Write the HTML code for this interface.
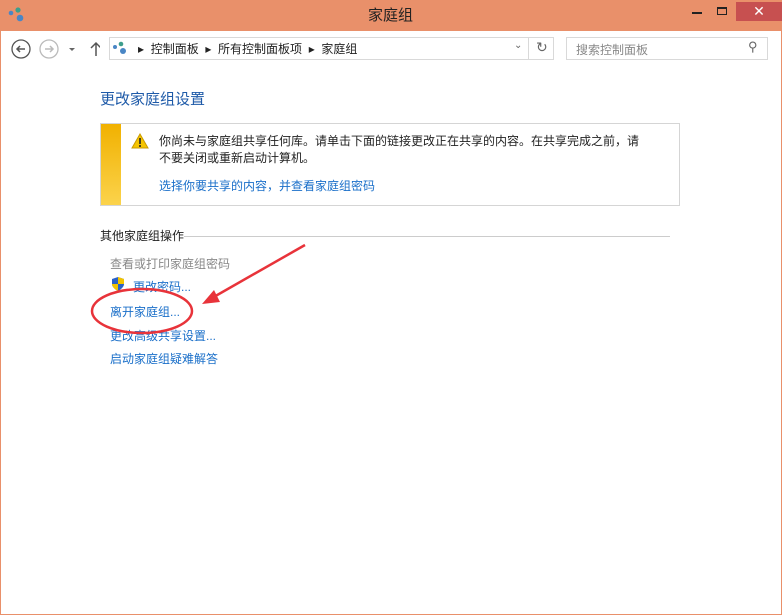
<!DOCTYPE html>
<html><head><meta charset="utf-8"><style>
*{margin:0;padding:0;box-sizing:border-box}
body{width:782px;height:615px;overflow:hidden;background:#e9906a;font-family:"Liberation Sans","Noto Sans CJK SC",sans-serif;font-size:12px;position:relative}
.win{position:absolute;left:1px;top:31px;width:780px;height:583px;background:#fff}
.a{position:absolute;white-space:nowrap}
.link{color:#1a6fc9}
</style></head><body>
<svg class="a" style="left:8px;top:6px" width="20" height="18"><circle cx="3" cy="7" r="2.3" fill="#4a86c5"/><circle cx="10" cy="4" r="2.6" fill="#3e9e8c"/><circle cx="12" cy="12" r="3.3" fill="#4a86c5"/></svg>
<div class="a" style="left:368px;top:4px;font-size:15px;color:#222">家庭组</div>
<div class="a" style="left:692px;top:12px;width:10px;height:2px;background:#222"></div>
<div class="a" style="left:717px;top:7px;width:10px;height:8px;border:1px solid #222;border-top-width:2px"></div>
<div class="a" style="left:736px;top:2px;width:46px;height:19px;background:#c75050;color:#fff;text-align:center;font-size:14px;line-height:19px">✕</div>
<div class="win">
<svg class="a" style="left:9px;top:6px" width="90" height="24"><circle cx="11" cy="12" r="9" fill="none" stroke="#555" stroke-width="1.3"/><path d="M15 12H7M10 9L7 12L10 15" stroke="#555" stroke-width="1.5" fill="none"/><circle cx="39" cy="12" r="9" fill="none" stroke="#bbb" stroke-width="1.3"/><path d="M35 12H43M40 9L43 12L40 15" stroke="#bbb" stroke-width="1.5" fill="none"/><path d="M59 11h6l-3 3z" fill="#666"/><path d="M86 19V6M81 11L86 6L91 11" stroke="#555" stroke-width="1.5" fill="none"/></svg>
<div class="a" style="left:108px;top:6px;width:445px;height:23px;border:1px solid #d9d9d9"></div>
<div class="a" style="left:527px;top:6px;width:1px;height:23px;background:#d9d9d9"></div>
<svg class="a" style="left:111px;top:9px" width="20" height="18"><circle cx="3" cy="7" r="2" fill="#4a86c5"/><circle cx="9" cy="4" r="2.3" fill="#3e9e8c"/><circle cx="11" cy="11" r="3" fill="#4a86c5"/></svg>
<div class="a" style="left:137px;top:9px;color:#222">▸&nbsp; 控制面板 &nbsp;▸&nbsp; 所有控制面板项 &nbsp;▸&nbsp; 家庭组</div>
<div class="a" style="left:513px;top:9px;color:#666;font-size:10px">⌄</div>
<div class="a" style="left:535px;top:8px;color:#666;font-size:14px">↻</div>
<div class="a" style="left:565px;top:6px;width:202px;height:23px;border:1px solid #d9d9d9"></div>
<div class="a" style="left:575px;top:10px;color:#888">搜索控制面板</div>
<div class="a" style="left:747px;top:8px;color:#666;font-size:13px">⚲</div>
<div class="a" style="left:99px;top:57px;font-size:15px;color:#1e5aa8">更改家庭组设置</div>
<div class="a" style="left:99px;top:92px;width:580px;height:83px;border:1px solid #d5d5d5"></div>
<div class="a" style="left:100px;top:93px;width:20px;height:81px;background:linear-gradient(#f1b100,#fbd34c)"></div>
<svg class="a" style="left:130px;top:102px" width="18" height="16"><path d="M9 1L17 15H1z" fill="#f5c400" stroke="#c99a00"/><path d="M9 5v6M9 12v2" stroke="#222" stroke-width="1.6"/></svg>
<div class="a" style="left:158px;top:102px;color:#222;line-height:17px">你尚未与家庭组共享任何库。请单击下面的链接更改正在共享的内容。在共享完成之前，请<br>不要关闭或重新启动计算机。</div>
<div class="a link" style="left:158px;top:146px">选择你要共享的内容，并查看家庭组密码</div>
<div class="a" style="left:99px;top:196px;color:#222">其他家庭组操作</div>
<div class="a" style="left:183px;top:205px;width:486px;height:1px;background:#ccc"></div>
<div class="a" style="left:109px;top:224px;color:#888">查看或打印家庭组密码</div>
<svg class="a" style="left:109px;top:245px" width="16" height="16"><path d="M8 1L14 3V8C14 12 8 15 8 15C8 15 2 12 2 8V3z" fill="#2b62c7"/><path d="M8 1V8H14V3zM8 8V15C8 15 2 12 2 8z" fill="#f2c400"/></svg>
<div class="a link" style="left:132px;top:247px">更改密码...</div>
<div class="a link" style="left:109px;top:272px">离开家庭组...</div>
<div class="a link" style="left:109px;top:296px">更改高级共享设置...</div>
<div class="a link" style="left:109px;top:319px">启动家庭组疑难解答</div>
</div>
<svg class="a" style="left:0;top:0" width="782" height="615"><ellipse cx="142" cy="311" rx="50" ry="22" fill="none" stroke="#e8333a" stroke-width="2.5"/><path d="M305 245L212 298" stroke="#e8333a" stroke-width="2.5"/><path d="M202 304L214 290L220 302z" fill="#e8333a"/></svg>
</body></html>
